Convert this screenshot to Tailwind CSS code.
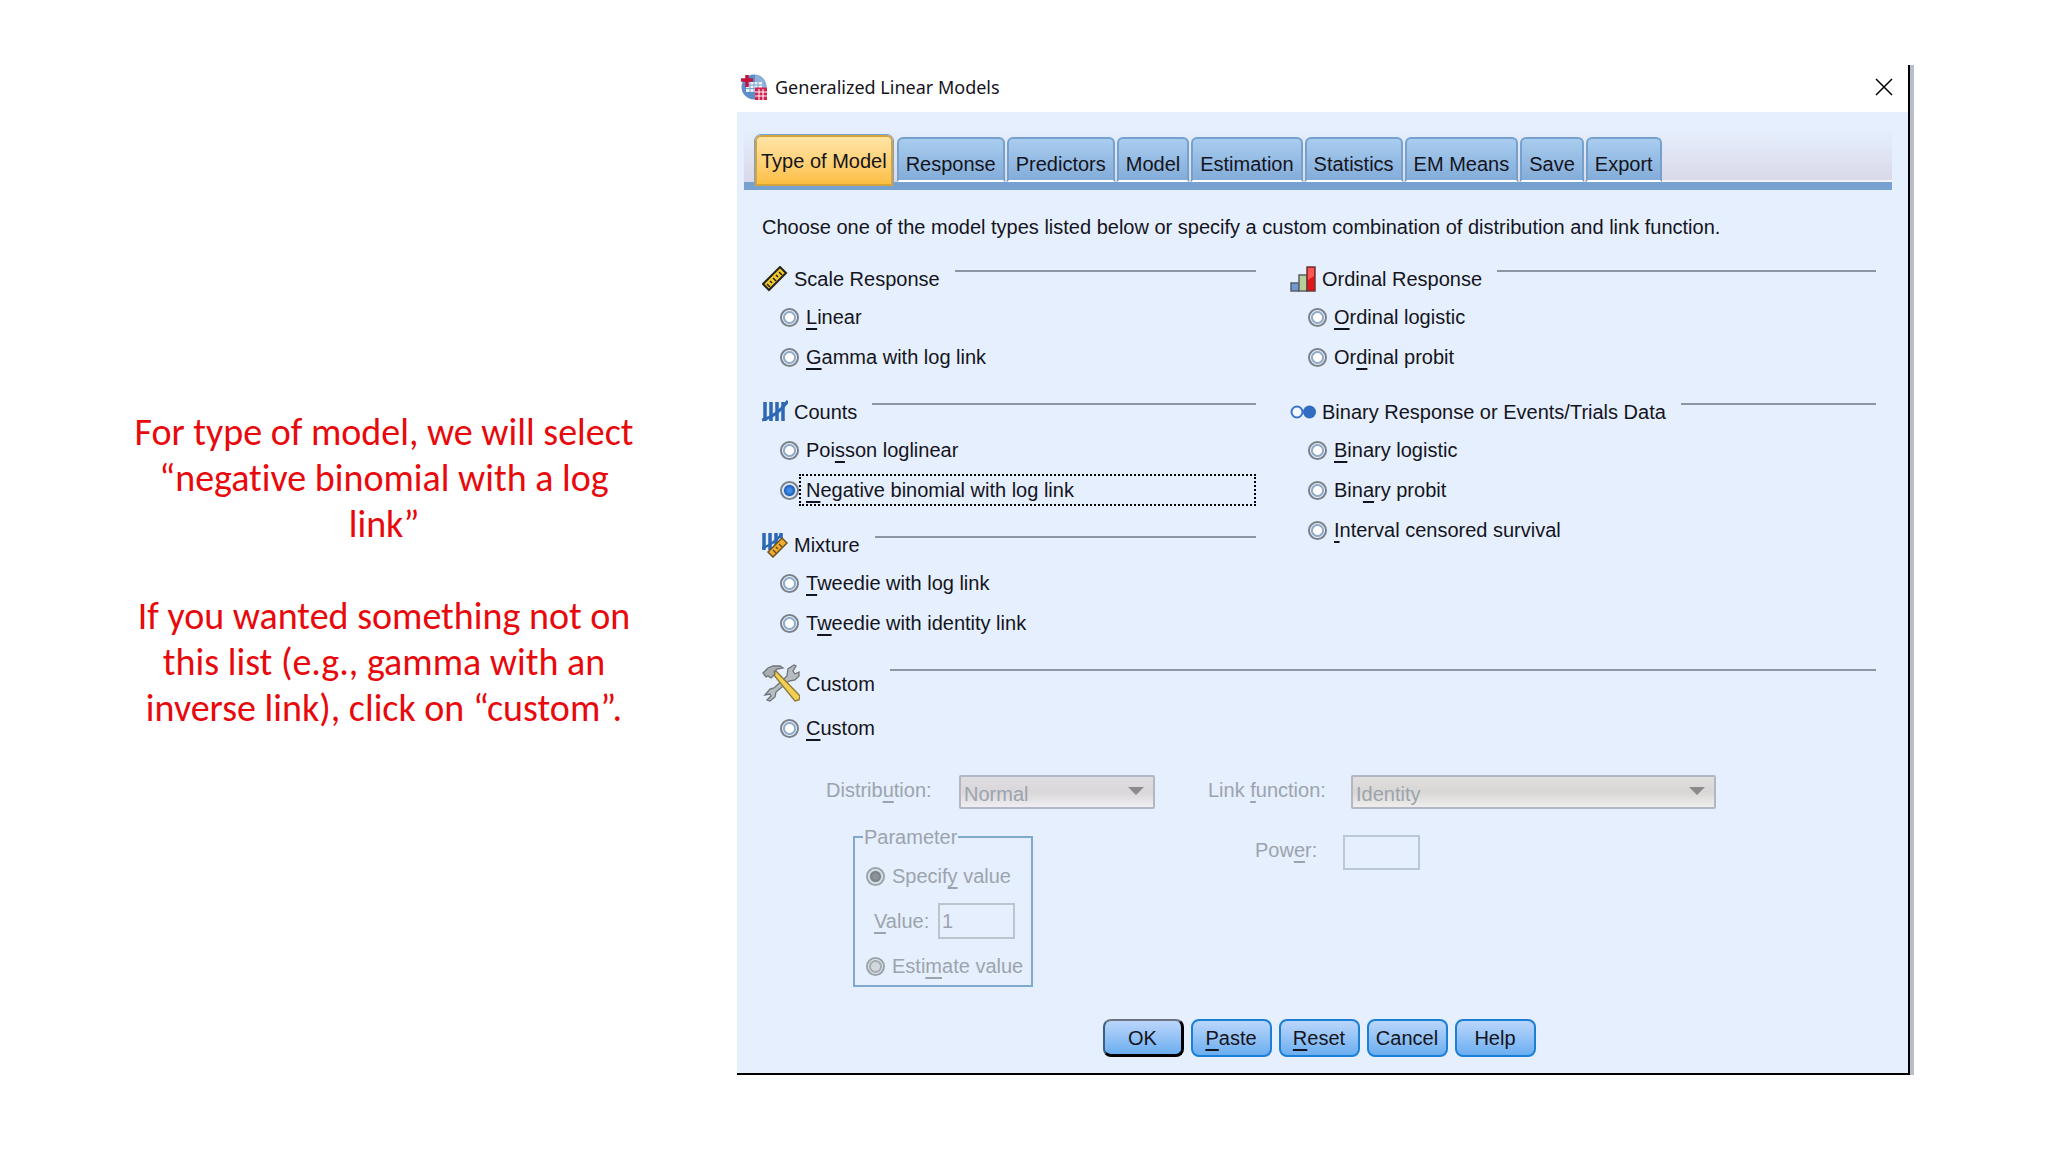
<!DOCTYPE html>
<html lang="en">
  <head>
    <meta charset="UTF-8" />
    <meta name="viewport" content="width=device-width, initial-scale=1.0" />
    <title>Generalized Linear Models</title>
    <script src="https://cdn.jsdelivr.net/npm/@tailwindcss/browser@4"></script>
  </head>
  <body class="bg-white">
    <main class="grid grid-cols-[737fr_1177fr_134fr] items-center pt-[65px]">
      <!-- Slide notes -->
      <aside
        class="pl-[125px] pr-[94px] text-center font-['Carlito','Lato',sans-serif] text-[38px] leading-[46px] text-[#e8090c] [font-variant-ligatures:none]"
      >
        <p>For type of model, we will select “negative binomial with a log link”</p>
        <p class="mt-[46px]">
          If you wanted something not on this list (e.g., gamma with an inverse
          link), click on “custom”.
        </p>
      </aside>

      <!-- Dialog -->
      <section
        class="border-r-4 border-[#b9bdcb] font-['Liberation_Sans',Arial,sans-serif] text-[20px] leading-6 text-[#14141c]"
      >
        <div class="border-r-2 border-b-2 border-black bg-[#e5effd]">
          <header class="flex h-[47px] items-center bg-white pb-[3px] pl-1 pr-[15px]">
            <svg class="size-[26px]" viewBox="0 0 26 26">
              <circle cx="13" cy="13" r="12.5" fill="#5d8fc6" />
              <path d="M14 1a12 12 0 0 1 11 13h-5V8h-6z" fill="#8fb0d8" />
              <path d="M5 8h16v10H5z" fill="#eaf2fb" />
              <path d="M5 11h16M5 14.500h12M9 8v10M13 8v10M17 8v6" stroke="#7ba3d2" stroke-width="1" />
              <path d="M6 1v12M0 6h12" stroke="#c4133c" stroke-width="3.5" />
              <path d="M14 13.500h12V26H14z" fill="#cf2350" />
              <path d="M14 18h12M14 22h12M18 15v11M22 15v11" stroke="#fff" stroke-width="1" />
            </svg>
            <h1 class="ml-[8px] flex-1 font-['Noto_Sans','Open_Sans',sans-serif] text-[18px]">
              Generalized Linear Models
            </h1>
            <button type="button" aria-label="Close">
              <svg class="size-[18px]" viewBox="0 0 18 18">
                <path d="M1 1l16 16M17 1L1 17" stroke="#000" stroke-width="1.5" />
              </svg>
            </button>
          </header>

          <!-- Tabs -->
          <nav
            class="ml-[7px] mr-4 flex h-[78px] items-end gap-[2px] border-b-8 border-[#76a1d0] bg-linear-to-b from-[#e5effd] from-25% to-[#d9d8e8] pl-[11px]"
          >
            <button type="button" class="relative -mb-1 h-[51px] rounded-t-md border-2 border-[#d3a43e] bg-linear-to-b from-[#ffe5a6] to-[#fdbf42] px-1 pb-2 pt-2 outline outline-[#76a1d0]">Type of Model</button>
            <button type="button" class="ml-[2px] h-[45px] rounded-t-md border-2 border-[#76a1cf] border-b-white bg-linear-to-b from-[#a9cdef] to-[#83acd9] px-[7px] pt-2">Response</button>
            <button type="button" class="h-[45px] rounded-t-md border-2 border-[#76a1cf] border-b-white bg-linear-to-b from-[#a9cdef] to-[#83acd9] px-[7px] pt-2">Predictors</button>
            <button type="button" class="h-[45px] rounded-t-md border-2 border-[#76a1cf] border-b-white bg-linear-to-b from-[#a9cdef] to-[#83acd9] px-[7px] pt-2">Model</button>
            <button type="button" class="h-[45px] rounded-t-md border-2 border-[#76a1cf] border-b-white bg-linear-to-b from-[#a9cdef] to-[#83acd9] px-[7px] pt-2">Estimation</button>
            <button type="button" class="h-[45px] rounded-t-md border-2 border-[#76a1cf] border-b-white bg-linear-to-b from-[#a9cdef] to-[#83acd9] px-[7px] pt-2">Statistics</button>
            <button type="button" class="h-[45px] rounded-t-md border-2 border-[#76a1cf] border-b-white bg-linear-to-b from-[#a9cdef] to-[#83acd9] px-[7px] pt-2">EM Means</button>
            <button type="button" class="h-[45px] rounded-t-md border-2 border-[#76a1cf] border-b-white bg-linear-to-b from-[#a9cdef] to-[#83acd9] px-[7px] pt-2">Save</button>
            <button type="button" class="h-[45px] rounded-t-md border-2 border-[#76a1cf] border-b-white bg-linear-to-b from-[#a9cdef] to-[#83acd9] px-[7px] pt-2">Export</button>
            <span class="-ml-[2px] h-[2px] flex-1 bg-[#f3f3fa]"></span>
          </nav>

          <form class="pb-4 pl-[25px] pr-8 pt-[25px]">
            <p class="whitespace-nowrap">
              Choose one of the model types listed below or specify a custom
              combination of distribution and link function.
            </p>

            <div class="mt-[26px] grid grid-cols-[494fr_586fr] gap-x-[34px]">
              <!-- Left column -->
              <div class="flex flex-col gap-[21px]">
                <section>
                  <div class="flex h-7 items-center">
                    <svg class="size-[26px]" viewBox="0 0 26 26">
                      <path d="M1 18L18 1l6 6L7 24z" fill="#f2c92e" stroke="#26231a" stroke-width="2" />
                      <path d="M5 18l3 3M8 15l2 2M11 12l3 3M14 9l2 2M17 6l3 3" stroke="#26231a" stroke-width="1.500" />
                    </svg>
                    <h2 class="ml-[6px]">Scale Response</h2>
                    <span class="ml-[15px] mt-[5px] h-[2px] flex-1 self-start bg-[#8b95a3]"></span>
                  </div>
                  <div class="mt-1 pl-[18px]">
                    <div class="flex h-10 items-center">
                      <input id="linear" name="model" type="radio" class="size-[19px] appearance-none rounded-full border-2 border-[#78808a] bg-[radial-gradient(circle,#fff_4px,#8fabc9_5px,#8fabc9_6px,#eef4fb_7px)]" />
                      <label for="linear" class="flex-1 pl-[7px]"><u class="decoration-2 underline-offset-4 [text-decoration-skip-ink:none]">L</u>inear</label>
                    </div>
                    <div class="flex h-10 items-center">
                      <input id="gamma" name="model" type="radio" class="size-[19px] appearance-none rounded-full border-2 border-[#78808a] bg-[radial-gradient(circle,#fff_4px,#8fabc9_5px,#8fabc9_6px,#eef4fb_7px)]" />
                      <label for="gamma" class="flex-1 pl-[7px]"><u class="decoration-2 underline-offset-4 [text-decoration-skip-ink:none]">G</u>amma with log link</label>
                    </div>
                  </div>
                </section>

                <section>
                  <div class="flex h-7 items-center">
                    <svg class="size-[26px]" viewBox="0 0 26 26">
                      <path d="M3 3v19M9 3v19M15 3v19M21 3v19" stroke="#2e68b5" stroke-width="3.500" />
                      <path d="M0 21C9 19 18 13 26 2" fill="none" stroke="#2e68b5" stroke-width="3" />
                    </svg>
                    <h2 class="ml-[6px]">Counts</h2>
                    <span class="ml-[15px] mt-[5px] h-[2px] flex-1 self-start bg-[#8b95a3]"></span>
                  </div>
                  <div class="mt-1 pl-[18px]">
                    <div class="flex h-10 items-center">
                      <input id="poisson" name="model" type="radio" class="size-[19px] appearance-none rounded-full border-2 border-[#78808a] bg-[radial-gradient(circle,#fff_4px,#8fabc9_5px,#8fabc9_6px,#eef4fb_7px)]" />
                      <label for="poisson" class="flex-1 pl-[7px]">Poi<u class="decoration-2 underline-offset-4 [text-decoration-skip-ink:none]">s</u>son loglinear</label>
                    </div>
                    <div class="flex h-10 items-center">
                      <input id="negbin" name="model" type="radio" checked class="size-[19px] appearance-none rounded-full border-2 border-[#78808a] bg-[radial-gradient(circle,#3f8be6_2px,#1f5fb8_5px,#c3d6ec_6px,#eef4fb_7px)]" />
                      <label for="negbin" class="flex h-8 flex-1 items-center border-2 border-dotted border-black pl-[5px]"><span><u class="decoration-2 underline-offset-4 [text-decoration-skip-ink:none]">N</u>egative binomial with log link</span></label>
                    </div>
                  </div>
                </section>

                <section>
                  <div class="flex h-7 items-center">
                    <svg class="size-[26px]" viewBox="0 0 26 26">
                      <path d="M2 1v17M8 1v17M14 1v12M19 1v5" stroke="#2e68b5" stroke-width="3.500" />
                      <path d="M0 16C8 14 14 9 20 2" fill="none" stroke="#2e68b5" stroke-width="2.500" />
                      <path d="M6 20L20 6l5 5L11 25z" fill="#efae2b" stroke="#6d5220" stroke-width="1.500" />
                      <path d="M11 18l3 3M14 15l2 2M17 12l3 3" stroke="#6d5220" stroke-width="1.500" />
                    </svg>
                    <h2 class="ml-[6px]">Mixture</h2>
                    <span class="ml-[15px] mt-[5px] h-[2px] flex-1 self-start bg-[#8b95a3]"></span>
                  </div>
                  <div class="mt-1 pl-[18px]">
                    <div class="flex h-10 items-center">
                      <input id="tweedie-log" name="model" type="radio" class="size-[19px] appearance-none rounded-full border-2 border-[#78808a] bg-[radial-gradient(circle,#fff_4px,#8fabc9_5px,#8fabc9_6px,#eef4fb_7px)]" />
                      <label for="tweedie-log" class="flex-1 pl-[7px]"><u class="decoration-2 underline-offset-4 [text-decoration-skip-ink:none]">T</u>weedie with log link</label>
                    </div>
                    <div class="flex h-10 items-center">
                      <input id="tweedie-id" name="model" type="radio" class="size-[19px] appearance-none rounded-full border-2 border-[#78808a] bg-[radial-gradient(circle,#fff_4px,#8fabc9_5px,#8fabc9_6px,#eef4fb_7px)]" />
                      <label for="tweedie-id" class="flex-1 pl-[7px]">T<u class="decoration-2 underline-offset-4 [text-decoration-skip-ink:none]">w</u>eedie with identity link</label>
                    </div>
                  </div>
                </section>
              </div>

              <!-- Right column -->
              <div class="flex flex-col gap-[21px]">
                <section>
                  <div class="flex h-7 items-center">
                    <svg class="size-[26px]" viewBox="0 0 26 26">
                      <path d="M1 17h8v8H1z" fill="#6f9bd0" stroke="#5a5f66" stroke-width="1.500" />
                      <path d="M9 9h8v16H9z" fill="#b7d09a" stroke="#5a5f66" stroke-width="1.500" />
                      <path d="M17 1h8v24h-8z" fill="#e0161b" stroke="#6b3a3a" stroke-width="1.500" />
                      <path d="M18 2h6v8l-6 4z" fill="#ff5552" />
                    </svg>
                    <h2 class="ml-[6px]">Ordinal Response</h2>
                    <span class="ml-[15px] mt-[5px] h-[2px] flex-1 self-start bg-[#8b95a3]"></span>
                  </div>
                  <div class="mt-1 pl-[18px]">
                    <div class="flex h-10 items-center">
                      <input id="ord-logistic" name="model" type="radio" class="size-[19px] appearance-none rounded-full border-2 border-[#78808a] bg-[radial-gradient(circle,#fff_4px,#8fabc9_5px,#8fabc9_6px,#eef4fb_7px)]" />
                      <label for="ord-logistic" class="flex-1 pl-[7px]"><u class="decoration-2 underline-offset-4 [text-decoration-skip-ink:none]">O</u>rdinal logistic</label>
                    </div>
                    <div class="flex h-10 items-center">
                      <input id="ord-probit" name="model" type="radio" class="size-[19px] appearance-none rounded-full border-2 border-[#78808a] bg-[radial-gradient(circle,#fff_4px,#8fabc9_5px,#8fabc9_6px,#eef4fb_7px)]" />
                      <label for="ord-probit" class="flex-1 pl-[7px]">Or<u class="decoration-2 underline-offset-4 [text-decoration-skip-ink:none]">d</u>inal probit</label>
                    </div>
                  </div>
                </section>

                <section>
                  <div class="flex h-7 items-center">
                    <svg class="size-[26px]" viewBox="0 0 26 26">
                      <circle cx="7" cy="13" r="5.500" fill="#f4f8fe" stroke="#3a74c4" stroke-width="2" />
                      <circle cx="19.500" cy="13" r="6.500" fill="#2f6cc2" />
                    </svg>
                    <h2 class="ml-[6px]">Binary Response or Events/Trials Data</h2>
                    <span class="ml-[15px] mt-[5px] h-[2px] flex-1 self-start bg-[#8b95a3]"></span>
                  </div>
                  <div class="mt-1 pl-[18px]">
                    <div class="flex h-10 items-center">
                      <input id="bin-logistic" name="model" type="radio" class="size-[19px] appearance-none rounded-full border-2 border-[#78808a] bg-[radial-gradient(circle,#fff_4px,#8fabc9_5px,#8fabc9_6px,#eef4fb_7px)]" />
                      <label for="bin-logistic" class="flex-1 pl-[7px]"><u class="decoration-2 underline-offset-4 [text-decoration-skip-ink:none]">B</u>inary logistic</label>
                    </div>
                    <div class="flex h-10 items-center">
                      <input id="bin-probit" name="model" type="radio" class="size-[19px] appearance-none rounded-full border-2 border-[#78808a] bg-[radial-gradient(circle,#fff_4px,#8fabc9_5px,#8fabc9_6px,#eef4fb_7px)]" />
                      <label for="bin-probit" class="flex-1 pl-[7px]">Bin<u class="decoration-2 underline-offset-4 [text-decoration-skip-ink:none]">a</u>ry probit</label>
                    </div>
                    <div class="flex h-10 items-center">
                      <input id="interval" name="model" type="radio" class="size-[19px] appearance-none rounded-full border-2 border-[#78808a] bg-[radial-gradient(circle,#fff_4px,#8fabc9_5px,#8fabc9_6px,#eef4fb_7px)]" />
                      <label for="interval" class="flex-1 pl-[7px]"><u class="decoration-2 underline-offset-4 [text-decoration-skip-ink:none]">I</u>nterval censored survival</label>
                    </div>
                  </div>
                </section>
              </div>
            </div>

            <!-- Custom model -->
            <section class="mt-[21px]">
              <div class="flex h-[38px] items-center">
                <svg class="size-[38px]" viewBox="0 0 38 38">
                  <path d="M3 31l5-6 4-1L25 12l1-7 6-4 2 1-3 5 2 3 4-2v4l-4 4-6 1L14 28l-1 5-5 4-3-1 4-4-1-2z" fill="#b7bcc0" stroke="#6e7377" stroke-width="1.300" />
                  <path d="M11 10l3-3 24 25-1 4-4 1z" fill="#f3cf52" stroke="#8c7a3c" stroke-width="1.300" />
                  <path d="M1 9l5-5 5-2h7l3 2-6 1-3 3 1 2-4 4-3-2-2 1z" fill="#a9aeb2" stroke="#6e7377" stroke-width="1.300" />
                </svg>
                <h2 class="ml-[6px] mt-[2px]">Custom</h2>
                <span class="ml-[15px] mt-[5px] h-[2px] flex-1 self-start bg-[#8b95a3]"></span>
              </div>
              <div class="mt-[6px] flex h-10 items-center pl-[18px]">
                <input id="custom" name="model" type="radio" class="size-[19px] appearance-none rounded-full border-2 border-[#78808a] bg-[radial-gradient(circle,#fff_4px,#8fabc9_5px,#8fabc9_6px,#eef4fb_7px)]" />
                <label for="custom" class="flex-1 pl-[7px]"><u class="decoration-2 underline-offset-4 [text-decoration-skip-ink:none]">C</u>ustom</label>
              </div>

              <div class="mt-[27px] grid grid-cols-[446fr_668fr] text-[#9da3ad]">
                <div class="pl-16">
                  <div class="flex h-[34px]">
                    <label for="distribution" class="w-[133px] pt-[3px]">Distrib<u class="decoration-2 underline-offset-4 [text-decoration-skip-ink:none]">u</u>tion:</label>
                    <div class="relative w-[196px]">
                      <select id="distribution" disabled class="h-full w-full appearance-none rounded-xs border-2 border-[#b3b7c3] bg-linear-to-b from-[#e0dde0] via-[#d9d7d9] to-[#efedef] pl-[3px] pt-[3px] opacity-100">
                        <option>Normal</option>
                      </select>
                      <svg class="absolute right-[11px] top-[12px] h-2 w-4" viewBox="0 0 16 8"><path d="M0 0h16L8 8z" fill="#8a8a8c" /></svg>
                    </div>
                  </div>
                  <fieldset class="ml-[27px] mt-4 w-[180px] border-2 border-[#7fa9cd] pb-[1px] pl-[11px]">
                    <legend class="-ml-[3px] px-[1px]">Parameter</legend>
                    <div class="mt-[9px] flex h-9 items-center">
                      <input id="specify" name="param" type="radio" checked disabled class="size-[19px] appearance-none rounded-full border-2 border-[#9ba3aa] bg-[radial-gradient(circle,#8d9499_2px,#7b8388_5px,#c9d2da_6px,#e4ebf3_7px)]" />
                      <label for="specify" class="pl-[7px]">Specif<u class="decoration-2 underline-offset-4 [text-decoration-skip-ink:none]">y</u> value</label>
                    </div>
                    <div class="mt-[9px] flex h-9 items-center pl-2">
                      <label for="value" class="w-[64px]"><u class="decoration-2 underline-offset-4 [text-decoration-skip-ink:none]">V</u>alue:</label>
                      <input id="value" type="text" value="1" disabled class="h-full w-[77px] border-2 border-[#bcc4cb] pl-[2px]" />
                    </div>
                    <div class="mt-[9px] flex h-9 items-center">
                      <input id="estimate" name="param" type="radio" disabled class="size-[19px] appearance-none rounded-full border-2 border-[#9ba3aa] bg-[radial-gradient(circle,#d3d8dc_4px,#a5adb3_5px,#a5adb3_6px,#e4ebf3_7px)]" />
                      <label for="estimate" class="pl-[7px]">Esti<u class="decoration-2 underline-offset-4 [text-decoration-skip-ink:none]">m</u>ate value</label>
                    </div>
                  </fieldset>
                </div>

                <div>
                  <div class="flex h-[34px]">
                    <label for="link" class="w-[143px] pt-[3px]">Link <u class="decoration-2 underline-offset-4 [text-decoration-skip-ink:none]">f</u>unction:</label>
                    <div class="relative w-[365px]">
                      <select id="link" disabled class="h-full w-full appearance-none rounded-xs border-2 border-[#b3b7c3] bg-linear-to-b from-[#e0dfdd] via-[#d9d7d5] to-[#efeeec] pl-[3px] pt-[3px] opacity-100">
                        <option>Identity</option>
                      </select>
                      <svg class="absolute right-[11px] top-[12px] h-2 w-4" viewBox="0 0 16 8"><path d="M0 0h16L8 8z" fill="#8a8a8c" /></svg>
                    </div>
                  </div>
                  <div class="mt-[26px] flex h-[35px] pl-[47px]">
                    <label for="power" class="w-[88px] pt-[3px]">Pow<u class="decoration-2 underline-offset-4 [text-decoration-skip-ink:none]">e</u>r:</label>
                    <input id="power" type="text" disabled class="w-[77px] border-2 border-[#b9c7d6]" />
                  </div>
                </div>
              </div>
            </section>

            <div class="mt-8 flex justify-center gap-[7px]">
              <button type="submit" class="h-[38px] w-[81px] rounded-lg border-2 border-b-3 border-r-3 border-l-[#3d5f80] border-t-[#6d7680] border-b-black border-r-black bg-linear-to-b from-[#bbd6fb] to-[#6aaef0]">OK</button>
              <button type="button" class="h-[38px] w-[81px] rounded-lg border-2 border-[#1c7fd6] bg-linear-to-b from-[#bbd6fb] to-[#6aaef0]"><u class="decoration-2 underline-offset-4 [text-decoration-skip-ink:none]">P</u>aste</button>
              <button type="reset" class="h-[38px] w-[81px] rounded-lg border-2 border-[#1c7fd6] bg-linear-to-b from-[#bbd6fb] to-[#6aaef0]"><u class="decoration-2 underline-offset-4 [text-decoration-skip-ink:none]">R</u>eset</button>
              <button type="button" class="h-[38px] w-[81px] rounded-lg border-2 border-[#1c7fd6] bg-linear-to-b from-[#bbd6fb] to-[#6aaef0]">Cancel</button>
              <button type="button" class="h-[38px] w-[81px] rounded-lg border-2 border-[#1c7fd6] bg-linear-to-b from-[#bbd6fb] to-[#6aaef0]">Help</button>
            </div>
          </form>
        </div>
      </section>
    </main>
  </body>
</html>
